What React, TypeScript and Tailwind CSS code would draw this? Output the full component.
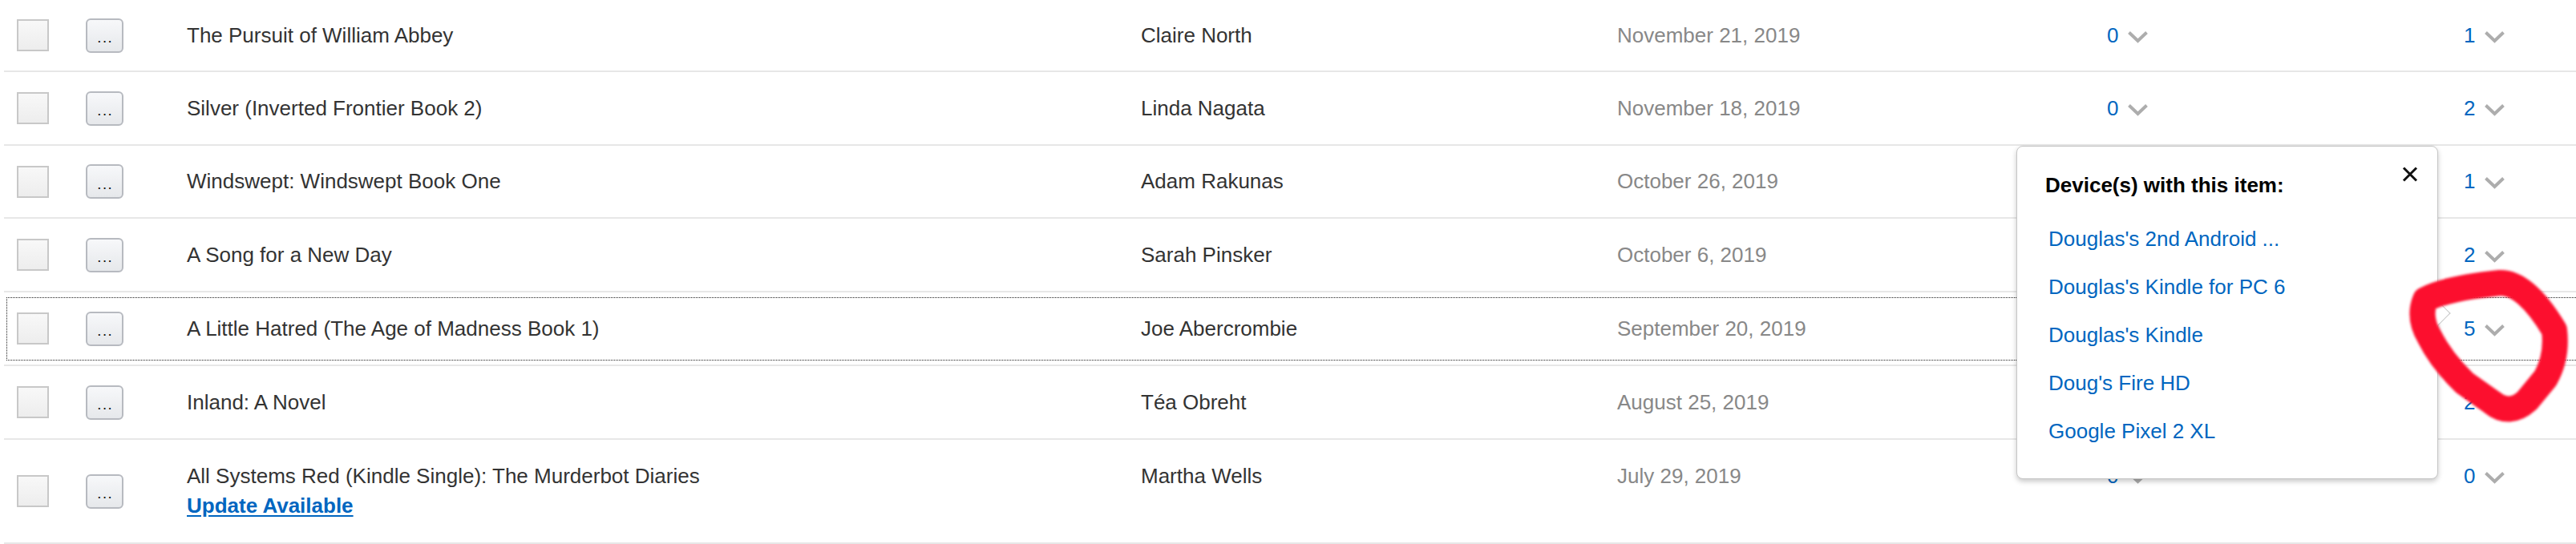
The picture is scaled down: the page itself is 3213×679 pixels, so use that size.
import React from "react";

type Row = {
  title: string;
  author: string;
  date: string;
  a: string;
  b: string;
  h: string;
  focused?: boolean;
  update?: boolean;
};

const rows: Row[] = [
  { title: "The Pursuit of William Abbey", author: "Claire North", date: "November 21, 2019", a: "0", b: "1", h: "h-[90px]" },
  { title: "Silver (Inverted Frontier Book 2)", author: "Linda Nagata", date: "November 18, 2019", a: "0", b: "2", h: "h-[92px]" },
  { title: "Windswept: Windswept Book One", author: "Adam Rakunas", date: "October 26, 2019", a: "", b: "1", h: "h-[91px]" },
  { title: "A Song for a New Day", author: "Sarah Pinsker", date: "October 6, 2019", a: "", b: "2", h: "h-[92px]" },
  { title: "A Little Hatred (The Age of Madness Book 1)", author: "Joe Abercrombie", date: "September 20, 2019", a: "", b: "5", h: "h-[92px]", focused: true },
  { title: "Inland: A Novel", author: "Téa Obreht", date: "August 25, 2019", a: "", b: "2", h: "h-[92px]" },
  { title: "All Systems Red (Kindle Single): The Murderbot Diaries", author: "Martha Wells", date: "July 29, 2019", a: "0", b: "0", h: "h-[130px]", update: true },
];

function Chevron() {
  return (
    <svg width="27" height="16" viewBox="0 0 27 16" className="mt-[3px] blur-[0.4px]">
      <polyline points="2.5,2.5 13.5,13 24.5,2.5" fill="none" stroke="#adadad" strokeWidth="4" />
    </svg>
  );
}

function Count({ n }: { n: string }) {
  if (!n) return <div className="h-[37px]" />;
  return (
    <div className="flex items-center h-[37px]">
      <span className="text-[#0066c0]">{n}</span>
      <span className="ml-[11px] flex items-center">
        <Chevron />
      </span>
    </div>
  );
}

function TableRow({ r }: { r: Row }) {
  return (
    <div className={`${r.h} border-b-2 border-[#e7e7e7] flex flex-col justify-center`}>
      <div
        className={
          r.focused
            ? "ml-[3px] h-[79px] border border-r-0 border-dotted border-[#222] flex items-center pl-[12px]"
            : "ml-[3px] border border-transparent flex items-center pl-[12px]"
        }
      >
        <div className="w-[40px] h-[40px] border-2 border-[#c8c8c8] bg-gradient-to-b from-[#f8f8f8] to-[#ededed] shrink-0" />
        <div className="ml-[46px] w-[47px] h-[43px] shrink-0 rounded-[6px] border-2 border-[#b7bac0] bg-gradient-to-b from-[#f7f8fa] to-[#e6e8eb] flex items-center justify-center">
          <span className="text-[13px] leading-none tracking-[3px] pl-[3px] pt-[9px] text-[#111] font-bold">...</span>
        </div>
        <div className="ml-[79px] flex items-start leading-[37px]">
          <div className="w-[1190px] shrink-0 text-[#333]">
            <div>{r.title}</div>
            {r.update && (
              <div className="font-bold text-[#0066c0] underline underline-offset-[3px]">Update Available</div>
            )}
          </div>
          <div className="w-[594px] shrink-0 text-[#333]">{r.author}</div>
          <div className="w-[611px] shrink-0 text-[#888]">{r.date}</div>
          <div className="w-[445px] shrink-0">
            <Count n={r.a} />
          </div>
          <div className="shrink-0">
            <Count n={r.b} />
          </div>
        </div>
      </div>
    </div>
  );
}

function Popup() {
  const devices = [
    "Douglas's 2nd Android ...",
    "Douglas's Kindle for PC 6",
    "Douglas's Kindle",
    "Doug's Fire HD",
    "Google Pixel 2 XL",
  ];
  return (
    <div className="absolute left-[2515px] top-[182px] w-[526px] h-[416px] bg-white border border-[#c6c6c6] rounded-[8px] shadow-[0_3px_6px_rgba(0,0,0,0.22)]">
      <div className="absolute right-[-12px] top-[197px] w-[22px] h-[22px] rotate-45 bg-white border-t border-r border-[#c6c6c6]" />
      <div className="pl-[35px] pt-[33px] leading-[30px] font-bold text-black">Device(s) with this item:</div>
      <svg className="absolute right-[24px] top-[25px]" width="20" height="19" viewBox="0 0 20 19">
        <line x1="2" y1="1.5" x2="18" y2="17.5" stroke="#111" strokeWidth="3" />
        <line x1="18" y1="1.5" x2="2" y2="17.5" stroke="#111" strokeWidth="3" />
      </svg>
      <div className="mt-[22px] pl-[39px]">
        {devices.map((d) => (
          <div key={d} className="leading-[60px] text-[#0066c0]">
            {d}
          </div>
        ))}
      </div>
    </div>
  );
}

function RedMark() {
  return (
    <svg
      className="absolute left-[2990px] top-[320px] blur-[1.6px]"
      width="223"
      height="230"
      viewBox="0 0 223 230"
    >
      <path
        d="M35,54 Q60,40 128,33 Q160,32 196,92 Q200,125 185,152 L162,180 Q140,200 118,182 L84,158 Q55,130 40,100 Q26,76 35,54 Z"
        fill="none"
        stroke="#fc0f2e"
        strokeWidth="32"
        strokeLinejoin="round"
        strokeLinecap="round"
      />
    </svg>
  );
}

export default function App() {
  return (
    <div className="relative w-[3213px] h-[679px] overflow-hidden bg-white font-['Liberation_Sans','Arial',sans-serif] text-[26px]">
      <div className="ml-[5px]">
        {rows.map((r) => (
          <TableRow key={r.title} r={r} />
        ))}
      </div>
      <Popup />
      <RedMark />
    </div>
  );
}
